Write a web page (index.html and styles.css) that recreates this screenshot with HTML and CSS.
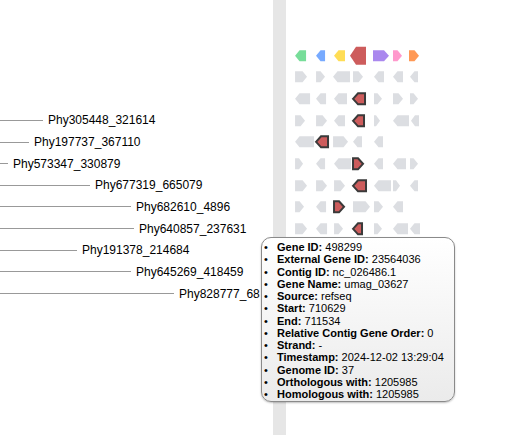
FILE: index.html
```html
<!DOCTYPE html>
<html>
<head>
<meta charset="utf-8">
<link rel="stylesheet" href="styles.css">
</head>
<body>
<div class="page">
  <div class="tree">
    <div class="trow"></div>
    <div class="trow"></div>
    <div class="trow"></div>
    <div class="trow"><span class="branch" style="width:43px"></span><span class="leaf">Phy305448_321614</span></div>
    <div class="trow"><span class="branch" style="width:29px"></span><span class="leaf">Phy197737_367110</span></div>
    <div class="trow"><span class="branch" style="width:8px"></span><span class="leaf">Phy573347_330879</span></div>
    <div class="trow"><span class="branch" style="width:90px"></span><span class="leaf">Phy677319_665079</span></div>
    <div class="trow"><span class="branch" style="width:131px"></span><span class="leaf">Phy682610_4896</span></div>
    <div class="trow"><span class="branch" style="width:134px"></span><span class="leaf">Phy640857_237631</span></div>
    <div class="trow"><span class="branch" style="width:77px"></span><span class="leaf">Phy191378_214684</span></div>
    <div class="trow"><span class="branch" style="width:131px"></span><span class="leaf">Phy645269_418459</span></div>
    <div class="trow"><span class="branch" style="width:174px"></span><span class="leaf">Phy828777_68</span></div>
  </div>
  <div class="divider"></div>
  <div class="genes">
    <svg class="grow" viewBox="286 -10.825 241 21.65">
      <polygon class="g-green" points="295,0 299.5,-5.5 306,-5.5 306,5.5 299.5,5.5"/>
      <polygon class="g-blue" points="316,0 320.5,-5.5 325,-5.5 325,5.5 320.5,5.5"/>
      <polygon class="g-yellow" points="334,0 338.5,-5.5 345,-5.5 345,5.5 338.5,5.5"/>
      <polygon class="g-red" points="350,0 356,-9 366,-9 366,9 356,9"/>
      <polygon class="g-purple" points="373,-5.5 384,-5.5 389,0 384,5.5 373,5.5"/>
      <polygon class="g-pink" points="393,-5.5 397.5,-5.5 402,0 397.5,5.5 393,5.5"/>
      <polygon class="g-orange" points="409,-5.5 414.5,-5.5 419,0 414.5,5.5 409,5.5"/>
    </svg>
    <svg class="grow" viewBox="286 -10.825 241 21.65">
      <polygon class="g" points="295,-5.5 302.5,-5.5 307,0 302.5,5.5 295,5.5"/>
      <polygon class="g" points="316,-5.5 320.5,-5.5 325,0 320.5,5.5 316,5.5"/>
      <polygon class="g" points="333,0 337.5,-5.5 350,-5.5 350,5.5 337.5,5.5"/>
      <polygon class="g" points="353,-5.5 358.5,-5.5 363,0 358.5,5.5 353,5.5"/>
      <polygon class="g" points="374,0 378.5,-5.5 384,-5.5 384,5.5 378.5,5.5"/>
      <polygon class="g" points="393,0 397.5,-5.5 403,-5.5 403,5.5 397.5,5.5"/>
      <polygon class="g" points="410,0 414.5,-5.5 418,-5.5 418,5.5 414.5,5.5"/>
    </svg>
    <svg class="grow" viewBox="286 -10.825 241 21.65">
      <polygon class="g" points="295,0 299.5,-5.5 310,-5.5 310,5.5 299.5,5.5"/>
      <polygon class="g" points="316,0 320.5,-5.5 326,-5.5 326,5.5 320.5,5.5"/>
      <polygon class="g" points="334,0 338.5,-5.5 347,-5.5 347,5.5 338.5,5.5"/>
      <polygon class="hit" points="353,0 358,-5.5 365,-5.5 365,5.5 358,5.5"/>
      <polygon class="g" points="374,-5.5 377.5,-5.5 382,0 377.5,5.5 374,5.5"/>
      <polygon class="g" points="393,-5.5 398.5,-5.5 403,0 398.5,5.5 393,5.5"/>
      <polygon class="g" points="410,-5.5 413.5,-5.5 418,0 413.5,5.5 410,5.5"/>
    </svg>
    <svg class="grow" viewBox="286 -10.825 241 21.65">
      <polygon class="g" points="295,-5.5 300.5,-5.5 305,0 300.5,5.5 295,5.5"/>
      <polygon class="g" points="316,-5.5 322.5,-5.5 327,0 322.5,5.5 316,5.5"/>
      <polygon class="g" points="334,0 338.5,-5.5 345,-5.5 345,5.5 338.5,5.5"/>
      <polygon class="hit" points="353,0 358,-5.5 364,-5.5 364,5.5 358,5.5"/>
      <polygon class="g" points="374,-5.5 376,-5.5 380,0 376,5.5 374,5.5"/>
      <polygon class="g" points="393,0 397.5,-5.5 409,-5.5 409,5.5 397.5,5.5"/>
      <polygon class="g" points="411,0 415,-5.5 419,-5.5 419,5.5 415,5.5"/>
    </svg>
    <svg class="grow" viewBox="286 -10.825 241 21.65">
      <polygon class="g" points="295,0 299.5,-5.5 314,-5.5 314,5.5 299.5,5.5"/>
      <polygon class="hit" points="316,0 321,-5.5 328,-5.5 328,5.5 321,5.5"/>
      <polygon class="g" points="333,-5.5 343.5,-5.5 348,0 343.5,5.5 333,5.5"/>
      <polygon class="g" points="353,0 357.5,-5.5 362,-5.5 362,5.5 357.5,5.5"/>
      <polygon class="g" points="374,0 378.5,-5.5 383,-5.5 383,5.5 378.5,5.5"/>
    </svg>
    <svg class="grow" viewBox="286 -10.825 241 21.65">
      <polygon class="g" points="295,-5.5 299,-5.5 303,0 299,5.5 295,5.5"/>
      <polygon class="g" points="316,0 320.5,-5.5 325,-5.5 325,5.5 320.5,5.5"/>
      <polygon class="g" points="334,0 338.5,-5.5 351,-5.5 351,5.5 338.5,5.5"/>
      <polygon class="hit" points="353,-5.5 358,-5.5 363,0 358,5.5 353,5.5"/>
      <polygon class="g" points="374,0 378.5,-5.5 383,-5.5 383,5.5 378.5,5.5"/>
      <polygon class="g" points="393,0 397.5,-5.5 406,-5.5 406,5.5 397.5,5.5"/>
      <polygon class="g" points="410,-5.5 413.5,-5.5 418,0 413.5,5.5 410,5.5"/>
    </svg>
    <svg class="grow" viewBox="286 -10.825 241 21.65">
      <polygon class="g" points="295,-5.5 302.5,-5.5 307,0 302.5,5.5 295,5.5"/>
      <polygon class="g" points="316,-5.5 322.5,-5.5 327,0 322.5,5.5 316,5.5"/>
      <polygon class="g" points="334,-5.5 340.5,-5.5 345,0 340.5,5.5 334,5.5"/>
      <polygon class="hit" points="353,0 358,-5.5 366,-5.5 366,5.5 358,5.5"/>
      <polygon class="g" points="374,0 378.5,-5.5 391,-5.5 391,5.5 378.5,5.5"/>
      <polygon class="g" points="393,-5.5 396,-5.5 400,0 396,5.5 393,5.5"/>
      <polygon class="g" points="410,0 414.5,-5.5 418,-5.5 418,5.5 414.5,5.5"/>
    </svg>
    <svg class="grow" viewBox="286 -10.825 241 21.65">
      <polygon class="g" points="295,-5.5 299.5,-5.5 304,0 299.5,5.5 295,5.5"/>
      <polygon class="g" points="316,0 320.5,-5.5 326,-5.5 326,5.5 320.5,5.5"/>
      <polygon class="hit" points="334,-5.5 339,-5.5 344,0 339,5.5 334,5.5"/>
      <polygon class="g" points="353,-5.5 365.5,-5.5 370,0 365.5,5.5 353,5.5"/>
      <polygon class="g" points="374,-5.5 378.5,-5.5 383,0 378.5,5.5 374,5.5"/>
      <polygon class="g" points="393,0 397.5,-5.5 403,-5.5 403,5.5 397.5,5.5"/>
    </svg>
    <svg class="grow" viewBox="286 -10.825 241 21.65">
      <polygon class="g" points="295,-5.5 302.5,-5.5 307,0 302.5,5.5 295,5.5"/>
      <polygon class="g" points="316,0 320.5,-5.5 327,-5.5 327,5.5 320.5,5.5"/>
      <polygon class="g" points="334,-5.5 338.5,-5.5 343,0 338.5,5.5 334,5.5"/>
      <polygon class="hit" points="353,0 358,-5.5 362,-5.5 362,5.5 358,5.5"/>
      <polygon class="g" points="374,-5.5 377.5,-5.5 382,0 377.5,5.5 374,5.5"/>
      <polygon class="g" points="393,0 397.5,-5.5 408,-5.5 408,5.5 397.5,5.5"/>
      <polygon class="g" points="410,0 414.5,-5.5 420,-5.5 420,5.5 414.5,5.5"/>
    </svg>
  </div>
</div>
<div class="tooltip">
  <ul>
    <li><b>Gene ID:</b> 498299</li>
    <li><b>External Gene ID:</b> 23564036</li>
    <li><b>Contig ID:</b> nc_026486.1</li>
    <li><b>Gene Name:</b> umag_03627</li>
    <li><b>Source:</b> refseq</li>
    <li><b>Start:</b> 710629</li>
    <li><b>End:</b> 711534</li>
    <li><b>Relative Contig Gene Order:</b> 0</li>
    <li><b>Strand:</b> -</li>
    <li><b>Timestamp:</b> 2024-12-02 13:29:04</li>
    <li><b>Genome ID:</b> 37</li>
    <li><b>Orthologous with:</b> 1205985</li>
    <li><b>Homologous with:</b> 1205985</li>
  </ul>
</div>
</body>
</html>
```
FILE: styles.css
```css
html, body {
  margin: 0;
  padding: 0;
  background: #fff;
}
body {
  width: 527px;
  height: 435px;
  overflow: hidden;
  position: relative;
  font-family: "Liberation Sans", Arial, sans-serif;
  color: #000;
}
.page {
  display: flex;
  height: 435px;
}
.tree {
  width: 273px;
  padding-top: 44.675px;
  overflow: hidden;
  flex: none;
}
.trow {
  height: 21.65px;
  display: flex;
  align-items: center;
  white-space: nowrap;
}
.branch {
  display: block;
  height: 1px;
  background: #999;
  flex: none;
}
.leaf {
  margin-left: 5px;
  font-size: 12px;
  line-height: 14px;
}
.divider {
  width: 13px;
  background: #e6e6e6;
  flex: none;
}
.genes {
  padding-top: 44.675px;
  flex: none;
}
.grow {
  display: block;
  width: 241px;
  height: 21.65px;
}
.g { fill: #dcdee2; }
.hit { fill: #cd5c5c; stroke: #3a3a3a; stroke-width: 2; }
.g-green { fill: #77dd99; }
.g-blue { fill: #77aaff; }
.g-yellow { fill: #ffdd55; }
.g-red { fill: #cd5c5c; }
.g-purple { fill: #aa88ee; }
.g-pink { fill: #ff99cc; }
.g-orange { fill: #ff9955; }
.tooltip {
  position: absolute;
  left: 261px;
  top: 237px;
  width: 192px;
  height: 163px;
  border: 1px solid #8a8a8a;
  border-radius: 10px;
  background: linear-gradient(#ffffff, #ebebeb);
  box-shadow: 0 1px 2px rgba(0,0,0,0.25);
  font-size: 11px;
  padding: 0;
}
.tooltip ul {
  margin: 3px 0 0 0;
  padding-left: 15px;
}
.tooltip li {
  line-height: 12.25px;
}
.tooltip li::marker {
  content: "\2022\00a0\00a0\00a0";
}
```
